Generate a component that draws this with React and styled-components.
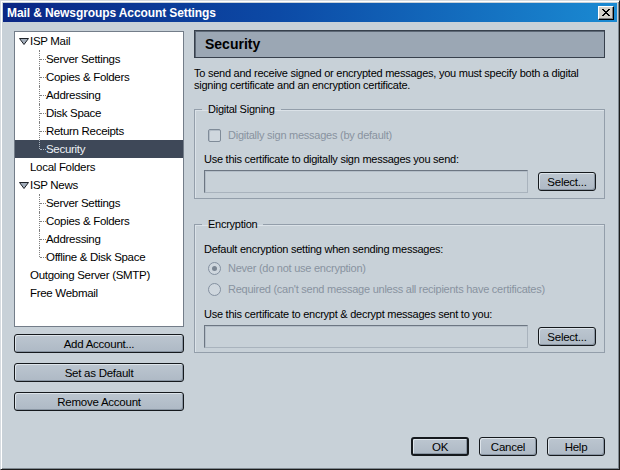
import React from 'react';
import styled, { createGlobalStyle } from 'styled-components';

const UI = `"Liberation Sans", Arial, sans-serif`;

const Global = createGlobalStyle`
  html, body { margin: 0; padding: 0; background: #c8d1d8; }
  body { font-family: ${UI}; font-size: 11px; letter-spacing: -0.25px; color: #000; }
  * { box-sizing: border-box; }
`;

const Window = styled.div`
  width: 620px;
  height: 470px;
  display: flex;
  flex-direction: column;
  background: #c8d1d8;
  border: 1px solid;
  border-color: #d6dbe0 #1c1c1c #1c1c1c #d6dbe0;
  box-shadow: inset 1px 1px 0 #ffffff, inset -1px -1px 0 #7f8890;
  padding: 2px;
`;

const TitleBar = styled.div`
  height: 19px;
  flex: none;
  display: flex;
  align-items: center;
  justify-content: space-between;
  padding: 0 3px 0 4px;
  background: linear-gradient(90deg, #0a2684 0%, #0c4aa6 45%, #1a8ad2 100%);
  color: #fff;
  font-family: ${UI};
  font-weight: bold;
  font-size: 12px;
  letter-spacing: -0.1px;
`;

const CloseButton = styled.div`
  width: 16px;
  height: 14px;
  display: flex;
  align-items: center;
  justify-content: center;
  background: #d4d0c8;
  border: 1px solid;
  border-color: #ffffff #000000 #000000 #ffffff;
  box-shadow: inset -1px -1px 0 #808080;
`;

const Body = styled.div`
  flex: 1;
  display: flex;
  flex-direction: column;
  padding: 9px 12px 11px 11px;
`;

const Main = styled.div`
  display: flex;
  gap: 10px;
`;

const LeftColumn = styled.div`
  width: 170px;
  flex: none;
  display: flex;
  flex-direction: column;
`;

const Tree = styled.div`
  height: 296px;
  background: #ffffff;
  border: 1px solid #737d89;
  font-size: 11.5px;
  letter-spacing: -0.3px;
`;

const TreeRow = styled.div`
  position: relative;
  height: 18px;
  display: flex;
  align-items: center;
  white-space: nowrap;
  padding-left: ${(p) => p.$indent}px;
  background: ${(p) => (p.$selected ? '#3e4858' : 'transparent')};
  color: ${(p) => (p.$selected ? '#eef2f6' : '#000')};

  ${(p) =>
    p.$child &&
    `
    &::before {
      content: '';
      position: absolute;
      left: 24px;
      top: 0;
      height: ${p.$last ? '9px' : '18px'};
      border-left: 1px dotted ${p.$selected ? '#aab4c0' : '#7f7f7f'};
    }
    &::after {
      content: '';
      position: absolute;
      left: 25px;
      top: 9px;
      width: 6px;
      border-top: 1px dotted ${p.$selected ? '#aab4c0' : '#7f7f7f'};
    }
  `}
`;

const Twisty = styled.svg`
  width: 10px;
  height: 7px;
  margin-right: 1px;
  flex: none;
`;

const ButtonStack = styled.div`
  margin-top: 7px;
  display: flex;
  flex-direction: column;
  gap: 10px;
`;

const Button = styled.button`
  height: 19px;
  width: ${(p) => (p.$wide ? '100%' : '58px')};
  padding: 0;
  font-family: ${UI};
  font-size: 11.5px;
  letter-spacing: -0.25px;
  color: #000;
  background: linear-gradient(#bcc6d0, #aeb9c5);
  border: ${(p) => (p.$default ? '2px' : '1px')} solid #15191d;
  border-radius: 3px;
  box-shadow: inset 1px 1px 0 #dde4ea, inset -1px -1px 0 #8995a2;
  display: flex;
  align-items: center;
  justify-content: center;
`;

const RightColumn = styled.div`
  flex: 1;
  display: flex;
  flex-direction: column;
`;

const Header = styled.div`
  height: 28px;
  margin-top: -1px;
  display: flex;
  align-items: center;
  padding-left: 10px;
  background: #9ba7b4;
  border: 1px solid #37404c;
  box-shadow: inset 1px 1px 0 #5d6876;
  font-family: ${UI};
  font-weight: bold;
  font-size: 14px;
  letter-spacing: 0;
`;

const Description = styled.div`
  margin-top: 9px;
  line-height: 12px;
  white-space: nowrap;
`;

const Group = styled.fieldset`
  margin: ${(p) => p.$mt}px 0 0 0;
  min-inline-size: 0;
  border: 1px solid #939eaa;
  box-shadow: inset 1px 1px 0 #dbe2e8;
  padding: 0 7px ${(p) => p.$pb}px 9px;
  display: flex;
  flex-direction: column;
`;

const Legend = styled.legend`
  margin-left: -2px;
  padding: 0 6px;
  line-height: 14px;
`;

const Line = styled.div`
  margin-top: ${(p) => p.$mt}px;
  height: 14px;
  line-height: 14px;
  display: flex;
  align-items: center;
  white-space: nowrap;
  color: ${(p) => (p.$disabled ? '#8893a0' : '#000')};
`;

const CheckBox = styled.span`
  width: 13px;
  height: 13px;
  margin: 0 7px 0 4px;
  border: 1px solid #7f8b98;
  border-radius: 2px;
  background: #cfd7de;
  box-shadow: inset 1px 1px 0 #b3bdc7;
  flex: none;
`;

const Radio = styled.span`
  width: 13px;
  height: 13px;
  margin: 0 7px 0 4px;
  border: 1px solid #8490a0;
  border-radius: 50%;
  background: #cfd7de;
  flex: none;
  display: flex;
  align-items: center;
  justify-content: center;

  &::after {
    content: '';
    width: 5px;
    height: 5px;
    border-radius: 50%;
    background: ${(p) => (p.$checked ? '#7b8693' : 'transparent')};
  }
`;

const FieldRow = styled.div`
  margin-top: 4px;
  display: flex;
  align-items: center;
  gap: 10px;
`;

const TextField = styled.div`
  width: 324px;
  height: 23px;
  border: 1px solid;
  border-color: #6c7682 #a9b3bd #a9b3bd #6c7682;
  box-shadow: inset 1px 1px 0 #b4bec8;
  background: #c8d1d8;
`;

const Footer = styled.div`
  margin-top: auto;
  display: flex;
  justify-content: flex-end;
  gap: 10px;
`;

const tree = [
  {
    label: 'ISP Mail',
    children: ['Server Settings', 'Copies & Folders', 'Addressing', 'Disk Space', 'Return Receipts', 'Security'],
    selectedChild: 5,
  },
  { label: 'Local Folders' },
  {
    label: 'ISP News',
    children: ['Server Settings', 'Copies & Folders', 'Addressing', 'Offline & Disk Space'],
  },
  { label: 'Outgoing Server (SMTP)' },
  { label: 'Free Webmail' },
];

function TwistyIcon() {
  return (
    <Twisty viewBox="0 0 10 7">
      <polygon points="0.5,0.5 9.5,0.5 5,6.5" fill="#a3aebb" stroke="#1e2228" strokeWidth="1" strokeLinejoin="round" />
    </Twisty>
  );
}

function AccountTree() {
  return (
    <Tree>
      {tree.map((node) => (
        <React.Fragment key={node.label}>
          <TreeRow $indent={node.children ? 4 : 15}>
            {node.children && <TwistyIcon />}
            {node.label}
          </TreeRow>
          {node.children &&
            node.children.map((c, i) => (
              <TreeRow
                key={node.label + c}
                $child
                $indent={31}
                $last={i === node.children.length - 1}
                $selected={node.selectedChild === i}
              >
                {c}
              </TreeRow>
            ))}
        </React.Fragment>
      ))}
    </Tree>
  );
}

export default function App() {
  return (
    <>
      <Global />
      <Window>
        <TitleBar>
          <span>Mail &amp; Newsgroups Account Settings</span>
          <CloseButton>
            <svg width="8" height="7" viewBox="0 0 8 7" shapeRendering="crispEdges">
              <path d="M0 0h2v1h1v1h2v-1h1v-1h2v1h-1v1h-1v1h-1v1h1v1h1v1h1v1h-2v-1h-1v-1h-2v1h-1v1h-2v-1h1v-1h1v-1h1v-1h-1v-1h-1v-1h-1z" fill="#000" />
            </svg>
          </CloseButton>
        </TitleBar>
        <Body>
          <Main>
            <LeftColumn>
              <AccountTree />
              <ButtonStack>
                <Button $wide>Add Account...</Button>
                <Button $wide>Set as Default</Button>
                <Button $wide>Remove Account</Button>
              </ButtonStack>
            </LeftColumn>
            <RightColumn>
              <Header>Security</Header>
              <Description>
                To send and receive signed or encrypted messages, you must specify both a digital
                <br />
                signing certificate and an encryption certificate.
              </Description>
              <Group $mt={11} $pb={5}>
                <Legend>Digital Signing</Legend>
                <Line $mt={12} $disabled>
                  <CheckBox />
                  Digitally sign messages (by default)
                </Line>
                <Line $mt={10}>Use this certificate to digitally sign messages you send:</Line>
                <FieldRow>
                  <TextField />
                  <Button>Select...</Button>
                </FieldRow>
              </Group>
              <Group $mt={18} $pb={4}>
                <Legend>Encryption</Legend>
                <Line $mt={11}>Default encryption setting when sending messages:</Line>
                <Line $mt={5} $disabled>
                  <Radio $checked />
                  Never (do not use encryption)
                </Line>
                <Line $mt={7} $disabled>
                  <Radio />
                  Required (can't send message unless all recipients have certificates)
                </Line>
                <Line $mt={11}>Use this certificate to encrypt &amp; decrypt messages sent to you:</Line>
                <FieldRow>
                  <TextField />
                  <Button>Select...</Button>
                </FieldRow>
              </Group>
            </RightColumn>
          </Main>
          <Footer>
            <Button $default>OK</Button>
            <Button>Cancel</Button>
            <Button>Help</Button>
          </Footer>
        </Body>
      </Window>
    </>
  );
}
